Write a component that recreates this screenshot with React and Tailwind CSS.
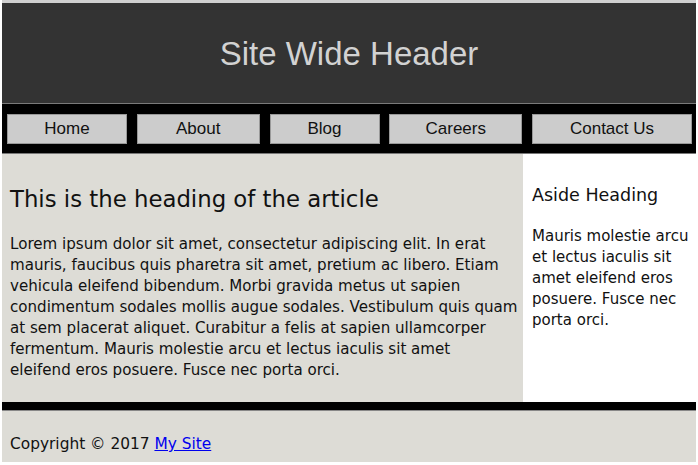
export default function App() {
  const nav = [
    ["Home", "w-[120px]"],
    ["About", "w-[123px]"],
    ["Blog", "w-[110px]"],
    ["Careers", "w-[133px]"],
    ["Contact Us", "w-[160px]"],
  ];
  const lines = [
    "Lorem ipsum dolor sit amet, consectetur adipiscing elit. In erat",
    "mauris, faucibus quis pharetra sit amet, pretium ac libero. Etiam",
    "vehicula eleifend bibendum. Morbi gravida metus ut sapien",
    "condimentum sodales mollis augue sodales. Vestibulum quis quam",
    "at sem placerat aliquet. Curabitur a felis at sapien ullamcorper",
    "fermentum. Mauris molestie arcu et lectus iaculis sit amet",
    "eleifend eros posuere. Fusce nec porta orci.",
  ];
  return (
    <div className="w-[698px] h-[465px] bg-white overflow-hidden">
      <div className="h-[3px] bg-[#d0d0d0] mx-[2px]" />
      <div className="w-[694px] ml-[2px]">
        <header className="h-[101px] bg-[#333333] flex items-center justify-center border-b border-[#7a7a7a]">
          <h1 className="text-[33px] text-[#d2d2d2] font-['Liberation_Sans',sans-serif] leading-none">
            Site Wide Header
          </h1>
        </header>
        <nav className="bg-black h-[50px] flex items-start justify-between pt-[10px] pl-[5px] pr-[4px] border-b border-[#777]">
          {nav.map(([t, w]) => (
            <a
              key={t}
              className={`${w} h-[30px] bg-[#cccccc] border border-[#999] flex items-center justify-center text-[17px] text-[#111] font-['Liberation_Sans',sans-serif]`}
            >
              {t}
            </a>
          ))}
        </nav>
        <div className="flex h-[248px] font-['DejaVu_Sans',sans-serif] text-[#111]">
          <article className="w-[521px] bg-[#dddcd6] px-[8px] pt-[31px]">
            <h2 className="text-[22.8px] leading-[28px] mb-[21px]">This is the heading of the article</h2>
            <p className="text-[15.1px] leading-[21px] whitespace-nowrap">
              {lines.map((l) => (
                <span key={l} className="block">{l}</span>
              ))}
            </p>
          </article>
          <aside className="flex-1 bg-white pl-[9px] pr-[6px] pt-[29px]">
            <h3 className="text-[17.5px] leading-[24px] mb-[19px]">Aside Heading</h3>
            <p className="text-[15px] leading-[21px]">
              Mauris molestie arcu et lectus iaculis sit amet eleifend eros posuere. Fusce nec porta orci.
            </p>
          </aside>
        </div>
        <div className="h-[9px] bg-black border-b border-[#888]" />
        <footer className="h-[51px] bg-[#dddcd6] px-[8px] pt-[23px] font-['DejaVu_Sans',sans-serif] text-[15.4px] leading-[21px] text-[#111]">
          Copyright © 2017 <a className="text-[#0000ee] underline">My Site</a>
        </footer>
      </div>
    </div>
  );
}
